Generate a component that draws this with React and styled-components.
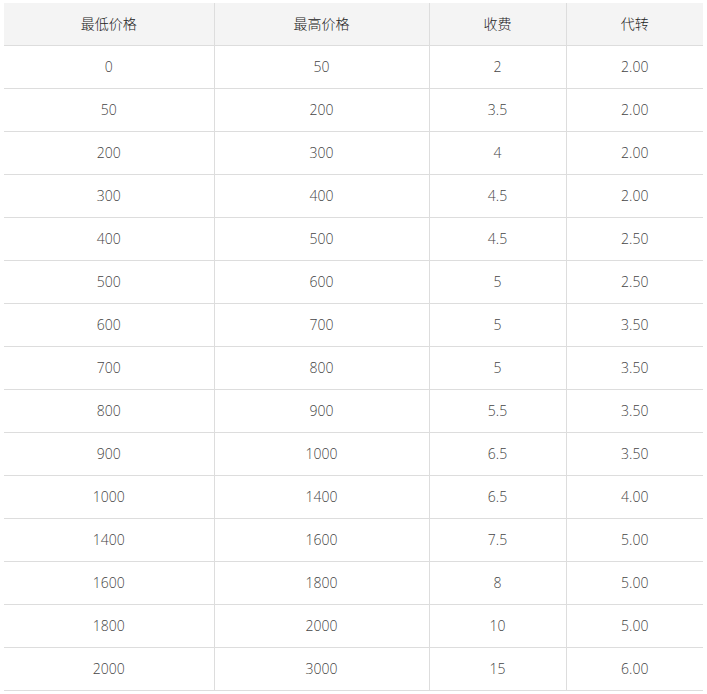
import React from "react";
import styled, { createGlobalStyle } from "styled-components";

const Global = createGlobalStyle`
  html, body { margin: 0; padding: 0; background: #fff; }
  body { font-family: "Open Sans", "Noto Sans CJK SC", sans-serif; }
`;

const Wrap = styled.div`
  padding: 3px 4px 0 4px;
`;

const Table = styled.table`
  width: 699px;
  border-collapse: collapse;
  table-layout: fixed;
  font-size: 14px;
  color: #333;
`;

const Th = styled.th`
  height: 40px;
  padding: 0 0 2px 0;
  background: #f4f4f4;
  font-weight: 300;
  font-family: "Open Sans", "Noto Sans CJK SC", sans-serif;
  color: #222;
  text-align: center;
  border-bottom: 1px solid #dddddd;
  border-left: ${(p) => (p.$first ? "none" : "1px solid #dddddd")};
`;

const Td = styled.td`
  height: 40px;
  padding: 0 0 2px 0;
  font-weight: 300;
  color: #444;
  text-align: center;
  border-bottom: 1px solid #dddddd;
  border-left: ${(p) => (p.$first ? "none" : "1px solid #dddddd")};
`;

const cols = [
  { label: "最低价格", w: 210 },
  { label: "最高价格", w: 215 },
  { label: "收费", w: 137 },
  { label: "代转", w: 137 },
];

const rows = [
  ["0", "50", "2", "2.00"],
  ["50", "200", "3.5", "2.00"],
  ["200", "300", "4", "2.00"],
  ["300", "400", "4.5", "2.00"],
  ["400", "500", "4.5", "2.50"],
  ["500", "600", "5", "2.50"],
  ["600", "700", "5", "3.50"],
  ["700", "800", "5", "3.50"],
  ["800", "900", "5.5", "3.50"],
  ["900", "1000", "6.5", "3.50"],
  ["1000", "1400", "6.5", "4.00"],
  ["1400", "1600", "7.5", "5.00"],
  ["1600", "1800", "8", "5.00"],
  ["1800", "2000", "10", "5.00"],
  ["2000", "3000", "15", "6.00"],
];

export default function App() {
  return (
    <>
      <Global />
      <Wrap>
        <Table>
          <colgroup>
            {cols.map((c) => (
              <col key={c.label} style={{ width: c.w }} />
            ))}
          </colgroup>
          <thead>
            <tr>
              {cols.map((c, i) => (
                <Th key={c.label} $first={i === 0}>
                  {c.label}
                </Th>
              ))}
            </tr>
          </thead>
          <tbody>
            {rows.map((r, ri) => (
              <tr key={ri}>
                {r.map((v, ci) => (
                  <Td key={ci} $first={ci === 0}>
                    {v}
                  </Td>
                ))}
              </tr>
            ))}
          </tbody>
        </Table>
      </Wrap>
    </>
  );
}
